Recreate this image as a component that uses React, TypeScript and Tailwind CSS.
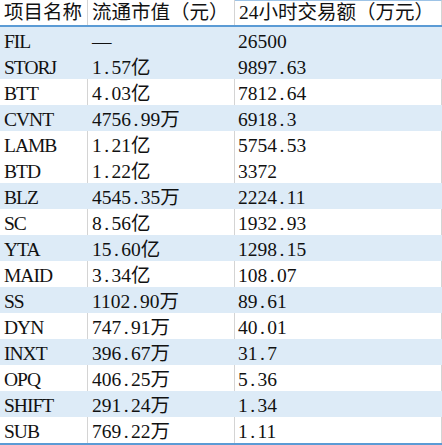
import React from "react";

type Row = { name: string; cap: string; vol: string; blue: boolean };

const rows: Row[] = [
  { name: "FIL", cap: "—", vol: "26500", blue: true },
  { name: "STORJ", cap: "1.57亿", vol: "9897.63", blue: true },
  { name: "BTT", cap: "4.03亿", vol: "7812.64", blue: false },
  { name: "CVNT", cap: "4756.99万", vol: "6918.3", blue: true },
  { name: "LAMB", cap: "1.21亿", vol: "5754.53", blue: false },
  { name: "BTD", cap: "1.22亿", vol: "3372", blue: false },
  { name: "BLZ", cap: "4545.35万", vol: "2224.11", blue: true },
  { name: "SC", cap: "8.56亿", vol: "1932.93", blue: false },
  { name: "YTA", cap: "15.60亿", vol: "1298.15", blue: true },
  { name: "MAID", cap: "3.34亿", vol: "108.07", blue: false },
  { name: "SS", cap: "1102.90万", vol: "89.61", blue: true },
  { name: "DYN", cap: "747.91万", vol: "40.01", blue: false },
  { name: "INXT", cap: "396.67万", vol: "31.7", blue: true },
  { name: "OPQ", cap: "406.25万", vol: "5.36", blue: false },
  { name: "SHIFT", cap: "291.24万", vol: "1.34", blue: true },
  { name: "SUB", cap: "769.22万", vol: "1.11", blue: false },
];

function Txt({ s }: { s: string }) {
  const parts = s.split(/(\.)/);
  return (
    <>
      {parts.map((p, i) =>
        p === "." ? (
          <span key={i} className="inline-block w-[0.5em] text-center">
            .
          </span>
        ) : (
          <React.Fragment key={i}>{p}</React.Fragment>
        )
      )}
    </>
  );
}

export default function App() {
  const font =
    "font-['Liberation_Serif','Noto_Sans_CJK_SC',serif] text-[19.5px] leading-[22px] text-[#111]";
  return (
    <div className={`w-[442px] h-[445px] bg-white overflow-hidden ${font}`}>
      <div className="grid grid-cols-[88px_147px_207px] border-b-2 border-[#5b9bd5]">
        <div className="h-[25px] pl-[4px] pt-[2px] border-r border-[#d4d4d4] whitespace-nowrap overflow-hidden">
          项目名称
        </div>
        <div className="h-[25px] pl-[4px] pt-[2px] border-r border-[#d4d4d4] whitespace-nowrap overflow-hidden">
          流通市值（元）
        </div>
        <div className="h-[25px] pl-[4px] pt-[1px] border-r border-t border-[#d4d4d4] border-t-[#9dc3e6] whitespace-nowrap overflow-hidden">
          24小时交易额（万元）
        </div>
      </div>
      <div className="border-b-2 border-[#5b9bd5]">
        {rows.map((r) => {
          const cell = r.blue
            ? "bg-[#ddebf7] border-[#ddebf7]"
            : "bg-white border-[#d4d4d4]";
          return (
            <div
              key={r.name}
              className="grid grid-cols-[88px_147px_207px]"
            >
              <div className={`h-[26px] pl-[4px] pt-[4px] border-r whitespace-nowrap tracking-[-1px] ${cell}`}>
                {r.name}
              </div>
              <div className={`h-[26px] pl-[4px] pt-[4px] border-r whitespace-nowrap ${cell}`}>
                <Txt s={r.cap} />
              </div>
              <div className={`h-[26px] pl-[3px] pt-[4px] border-r whitespace-nowrap ${cell}`}>
                <Txt s={r.vol} />
              </div>
            </div>
          );
        })}
      </div>
    </div>
  );
}
